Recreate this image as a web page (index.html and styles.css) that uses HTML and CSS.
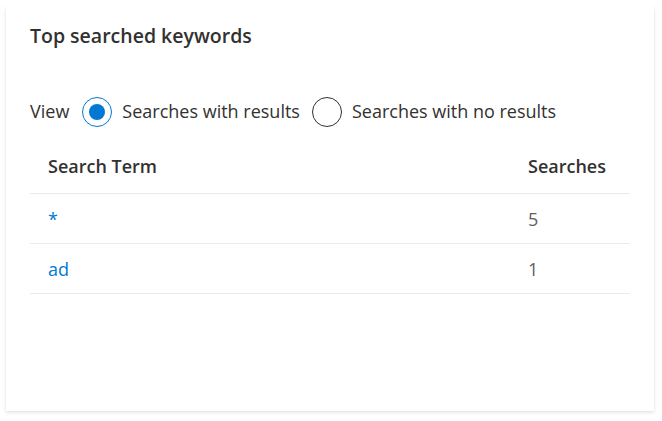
FILE: index.html
```html
<!DOCTYPE html>
<html lang="en">
<head>
<meta charset="utf-8">
<title>Top searched keywords</title>
<link rel="stylesheet" href="styles.css">
</head>
<body>
<section class="card">
  <h2 class="card-title">Top searched keywords</h2>
  <div class="view-row" role="radiogroup" aria-label="View">
    <span class="view-label">View</span>
    <label class="radio radio-checked">
      <span class="radio-circle"><span class="radio-dot"></span></span>
      <span class="radio-text">Searches with results</span>
    </label>
    <label class="radio">
      <span class="radio-circle"></span>
      <span class="radio-text">Searches with no results</span>
    </label>
  </div>
  <table class="kw-table">
    <thead>
      <tr>
        <th class="col-term">Search Term</th>
        <th class="col-count">Searches</th>
      </tr>
    </thead>
    <tbody>
      <tr>
        <td class="col-term"><a class="term-link" href="#">*</a></td>
        <td class="col-count">5</td>
      </tr>
      <tr>
        <td class="col-term"><a class="term-link" href="#">ad</a></td>
        <td class="col-count">1</td>
      </tr>
    </tbody>
  </table>
</section>
</body>
</html>
```

FILE: styles.css
```css
html, body {
  margin: 0;
  padding: 0;
  background: #ffffff;
}

body {
  font-family: "Segoe UI", "Open Sans", "Noto Sans", sans-serif;
  color: #323130;
  padding: 6px 8px 10px 6px;
}

.card {
  width: 648px;
  height: 405px;
  box-sizing: border-box;
  background: #ffffff;
  box-shadow: 0 1.6px 3.6px rgba(0, 0, 0, 0.13), 0 0.3px 0.9px rgba(0, 0, 0, 0.11);
  padding: 16px 24px 0 24px;
}

.card-title {
  margin: 0;
  font-size: 19.5px;
  line-height: 28px;
  font-weight: 600;
  color: #323130;
}

.view-row {
  margin-top: 47px;
  display: flex;
  align-items: center;
  height: 30px;
  font-size: 18px;
}

.view-label {
  margin-right: 13px;
  line-height: 24px;
  padding-bottom: 2px;
}

.radio {
  display: flex;
  align-items: center;
  margin-right: 12px;
  cursor: pointer;
}

.radio-circle {
  width: 30px;
  height: 30px;
  box-sizing: border-box;
  border: 1.5px solid #323130;
  border-radius: 50%;
  display: flex;
  align-items: center;
  justify-content: center;
  margin-right: 10px;
}

.radio-checked .radio-circle {
  border-color: #0078d4;
}

.radio-dot {
  width: 16px;
  height: 16px;
  border-radius: 50%;
  background: #0078d4;
}

.radio-text {
  line-height: 24px;
  padding-bottom: 2px;
}

.kw-table {
  margin-top: 14px;
  width: 600px;
  border-collapse: collapse;
  font-size: 18px;
}

.kw-table th {
  font-size: 18px;
  font-weight: 600;
  text-align: left;
  height: 50px;
  padding: 0 0 2px 18px;
  color: #323130;
  border-bottom: 1px solid #edebe9;
}

.kw-table td {
  height: 49px;
  padding: 0 0 0 18px;
  border-bottom: 1px solid #edebe9;
}

.col-count {
  width: 102px;
  color: #605e5c;
}

.kw-table th.col-count {
  color: #323130;
}

.term-link {
  color: #0078d4;
  text-decoration: none;
}
```
